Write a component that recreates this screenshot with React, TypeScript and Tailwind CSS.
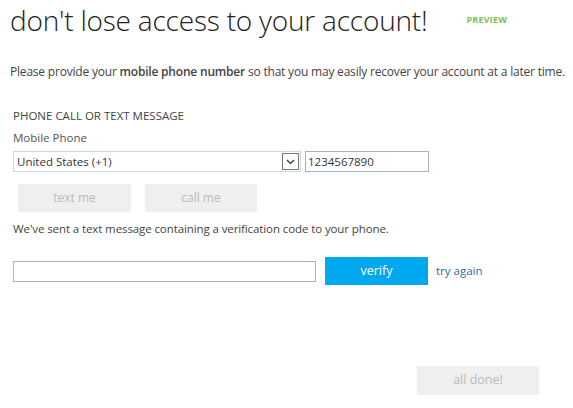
import React from 'react';

export default function App() {
    return (
        <div className="w-[573px] h-[408px] bg-white text-[#444] overflow-hidden" style={{ fontFamily: '"Open Sans", "Noto Sans", sans-serif' }}>
            <div className="flex items-start pl-[10px] pt-[2px]">
                <h1 className="text-[28px] font-light text-[#222] leading-[36px] tracking-[-0.2px]">don't lose access to your account!</h1>
                <span className="ml-[39px] mt-[11px] text-[9px] font-bold text-[#7cbf4f] tracking-[0.2px]">PREVIEW</span>
            </div>
            <p className="mt-[26px] pl-[10px] text-[12px] leading-[16px] text-[#444] tracking-[-0.2px]">
                Please provide your <b className="font-semibold">mobile phone number</b> so that you may easily recover your account at a later time.
            </p>
            <div className="pl-[13px] mt-[28px]">
                <div className="text-[11.5px] leading-[16px] text-[#444]">PHONE CALL OR TEXT MESSAGE</div>
                <div className="text-[11.5px] leading-[16px] mt-[6px] text-[#555]">Mobile Phone</div>
                <div className="flex items-center mt-[5px]">
                    <div className="w-[288px] h-[21px] border border-[#c9dae4] flex items-center justify-between pl-[3px] pr-[1px]">
                        <span className="text-[11.5px] text-[#333]">United States (+1)</span>
                        <span className="w-[17px] h-[17px] border border-[#777] flex items-center justify-center">
                            <svg width="9" height="6" viewBox="0 0 9 6"><path d="M1 1l3.5 3.5L8 1" stroke="#444" strokeWidth="1.5" fill="none" /></svg>
                        </span>
                    </div>
                    <div className="ml-[4px] w-[124px] h-[21px] border border-[#a9b3ba] flex items-center pl-[2px] text-[11.5px] text-[#333]">1234567890</div>
                </div>
                <div className="flex gap-[14px] mt-[12px] pl-[5px]">
                    <button className="w-[113px] h-[28px] bg-[#efeff0] text-[12px] text-[#bbb]">text me</button>
                    <button className="w-[112px] h-[28px] bg-[#efeff0] text-[12px] text-[#bbb]">call me</button>
                </div>
                <div className="text-[11.5px] leading-[16px] mt-[9px] text-[#444] tracking-[-0.1px]">We've sent a text message containing a verification code to your phone.</div>
                <div className="flex items-center mt-[20px]">
                    <div className="w-[303px] h-[21px] border border-[#a9b3ba]"></div>
                    <button className="ml-[9px] w-[103px] h-[28px] bg-[#00a9ed] text-white text-[12.5px]">verify</button>
                    <span className="ml-[8px] text-[11.5px] text-[#2e6aa8]">try again</span>
                </div>
            </div>
            <div className="flex justify-end pr-[34px] mt-[81px]">
                <button className="w-[122px] h-[29px] bg-[#efeff0] text-[12.5px] text-[#bbb]">all done!</button>
            </div>
        </div>
    );
}
